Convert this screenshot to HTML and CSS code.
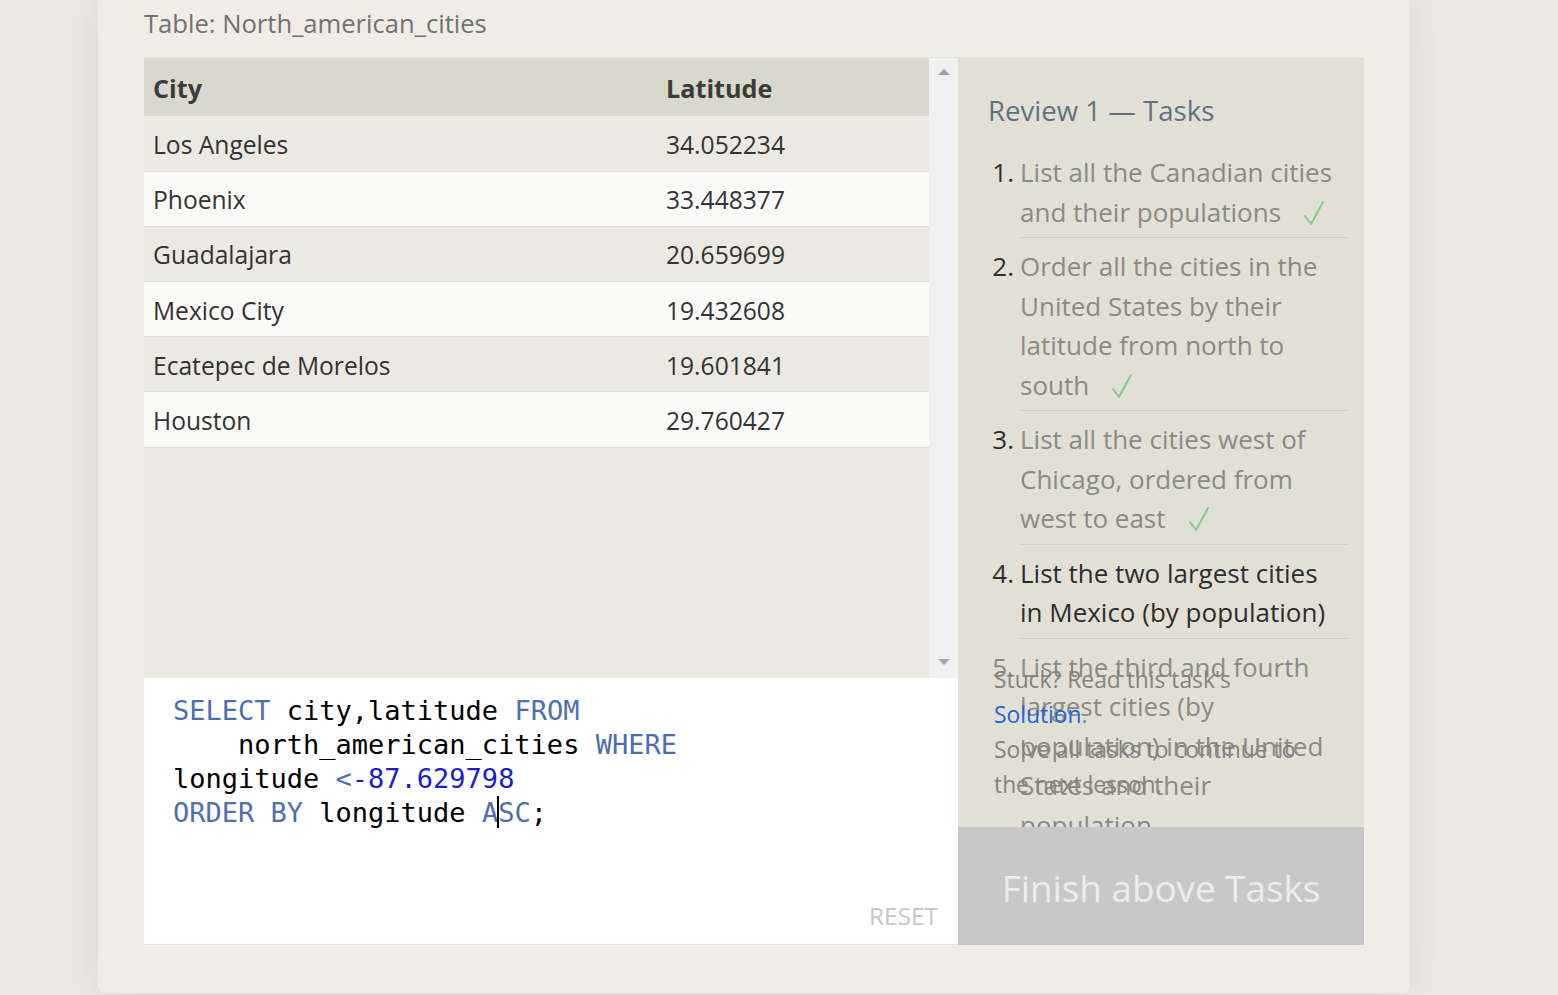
FILE: index.html
```html
<!DOCTYPE html>
<html>
<head>
<meta charset="utf-8">
<title>SQL Review</title>
<link rel="stylesheet" href="styles.css">
</head>
<body>
<div class="card">
  <div class="table-title">Table: North_american_cities</div>
  <div class="workspace">
    <div class="left">
      <div class="table-box">
        <div class="table-scroll">
          <table class="results">
            <thead>
              <tr><th class="c1">City</th><th>Latitude</th></tr>
            </thead>
            <tbody>
              <tr><td>Los Angeles</td><td>34.052234</td></tr>
              <tr><td>Phoenix</td><td>33.448377</td></tr>
              <tr><td>Guadalajara</td><td>20.659699</td></tr>
              <tr><td>Mexico City</td><td>19.432608</td></tr>
              <tr><td>Ecatepec de Morelos</td><td>19.601841</td></tr>
              <tr><td>Houston</td><td>29.760427</td></tr>
            </tbody>
          </table>
        </div>
        <div class="scrollbar">
          <span class="arrow up"></span>
          <span class="arrow down"></span>
        </div>
      </div>
      <div class="editor">
        <pre class="code"><span class="kw">SELECT</span> city,latitude <span class="kw">FROM</span>
    north_american_cities <span class="kw">WHERE</span>
longitude <span class="kw">&lt;</span><span class="num">-87.629798</span>
<span class="kw">ORDER</span> <span class="kw">BY</span> longitude <span class="kw">A<span class="caret"></span>SC</span>;</pre>
        <div class="reset">RESET</div>
      </div>
    </div>
    <div class="panel">
      <h2 class="panel-title">Review 1 — Tasks</h2>
      <ol class="tasks">
        <li class="task done"><span class="n">1.</span><span class="t">List all the Canadian cities and their populations<svg class="check" viewBox="0 0 22 26" width="22" height="26"><polyline points="2,16 8,24 20,2"/></svg></span></li>
        <li class="task done"><span class="n">2.</span><span class="t">Order all the cities in the United States by their latitude from north to south<svg class="check" viewBox="0 0 22 26" width="22" height="26"><polyline points="2,16 8,24 20,2"/></svg></span></li>
        <li class="task done"><span class="n">3.</span><span class="t">List all the cities west of Chicago, ordered from west to east<svg class="check" viewBox="0 0 22 26" width="22" height="26"><polyline points="2,16 8,24 20,2"/></svg></span></li>
        <li class="task current"><span class="n">4.</span><span class="t">List the two largest cities in Mexico (by population)</span></li>
        <li class="task todo"><span class="n">5.</span><span class="t">List the third and fourth largest cities (by population) in the United States and their population</span></li>
      </ol>
      <div class="stuck">Stuck? Read this task's <a class="sol" href="#">Solution</a>.<br>Solve all tasks to continue to the next lesson.</div>
      <div class="finish">Finish above Tasks</div>
    </div>
  </div>
</div>
</body>
</html>
```

FILE: styles.css
```css
html, body {
  margin: 0;
  padding: 0;
}
body {
  background: #ede8e5;
  font-family: "Open Sans", "Noto Sans", sans-serif;
  overflow: hidden;
  height: 995px;
}
.card {
  margin-left: 98px;
  width: 1312px;
  padding: 0 46px 48px 46px;
  box-sizing: border-box;
  background: #f0ede6;
  border-radius: 0 0 6px 6px;
  box-shadow: 0 0 40px rgba(90, 60, 50, 0.10);
}
.table-title {
  height: 57px;
  box-sizing: border-box;
  padding-top: 6px;
  font-size: 25.6px;
  line-height: 36px;
  color: #727272;
}
.workspace {
  display: flex;
  height: 888px;
}
.left {
  width: 814px;
  display: flex;
  flex-direction: column;
}
.table-box {
  height: 621px;
  display: flex;
  background: #e9e8e0;
  border-top: 1px solid #e4e2da;
  box-sizing: border-box;
}
.table-scroll {
  width: 785px;
}
.results {
  width: 100%;
  border-collapse: collapse;
  color: #333;
  font-size: 24.6px;
}
.results th {
  background: #d9d8cc;
  height: 58px;
  text-align: left;
  font-weight: 700;
  color: #3b3b3b;
  padding: 2px 0 0 9px;
  box-sizing: border-box;
  font-size: 25.2px;
}
.results th.c1 {
  width: 513px;
}
.results td {
  height: 55.2px;
  padding: 2px 0 0 9px;
  box-sizing: border-box;
  border-bottom: 1px solid #e0ded6;
}
.results tbody tr:nth-child(odd) td {
  background: #ebe9e1;
}
.results tbody tr:nth-child(even) td {
  background: #fafaf8;
}
.scrollbar {
  width: 29px;
  background: #f0f0f0;
  display: flex;
  flex-direction: column;
  justify-content: space-between;
  align-items: center;
  padding: 11px 0 13px;
  box-sizing: border-box;
}
.arrow {
  width: 0;
  height: 0;
  border-left: 6px solid transparent;
  border-right: 6px solid transparent;
}
.arrow.up {
  border-bottom: 6px solid #a3a3a3;
}
.arrow.down {
  border-top: 6px solid #a3a3a3;
}
.editor {
  flex: 1;
  background: #fff;
  border-bottom: 1px solid #e2e0d8;
  display: flex;
  flex-direction: column;
  padding: 16px 20px 13px 29px;
}
.code {
  margin: 0;
  font-family: "DejaVu Sans Mono", "Liberation Mono", monospace;
  font-size: 27px;
  line-height: 34px;
  color: #000;
}
.kw {
  color: #4e6fae;
}
.num {
  color: #1c1ccc;
}
.caret {
  display: inline-block;
  width: 2px;
  height: 32px;
  background: #000;
  vertical-align: -6px;
  margin: 0 -1px;
}
.reset {
  margin-top: auto;
  align-self: flex-end;
  font-size: 24.4px;
  color: #c6c6c6;
  line-height: 30px;
}
.panel {
  width: 406px;
  background: #e2e0d5;
  display: flex;
  flex-direction: column;
  overflow: hidden;
  border-top: 1px solid #e6e4dc;
  box-sizing: border-box;
}
.panel-title {
  margin: 0;
  padding: 33px 0 0 30px;
  height: 86px;
  box-sizing: border-box;
  font-size: 27.6px;
  line-height: 38px;
  font-weight: 400;
  color: #637080;
}
.tasks {
  list-style: none;
  margin: 0;
  padding: 0 16px 0 30px;
  height: 518px;
  flex: none;
  font-size: 26px;
  line-height: 39.5px;
}
.task {
  display: flex;
  padding-top: 9px;
}
.task .n {
  width: 32px;
  flex: none;
  text-align: right;
  padding-right: 6px;
  box-sizing: border-box;
  color: #2e2e2e;
}
.task .t {
  flex: 1;
  padding: 0 10px 5px 0;
  border-bottom: 1px solid #d3d1c6;
}
.task.done .t {
  color: #8a8a86;
}
.task.current .t {
  color: #2e2e2e;
}
.task.todo .t {
  color: #8a8a86;
  border-bottom: none;
}
.task.todo .n {
  color: #8a8a86;
}
.check {
  margin-left: 22px;
  vertical-align: -4px;
  fill: none;
  stroke: #80cd8c;
  stroke-width: 2;
  stroke-linecap: round;
  stroke-linejoin: round;
}
.stuck {
  padding: 0 0 0 36px;
  width: 350px;
  box-sizing: border-box;
  font-size: 22.8px;
  line-height: 35px;
  color: #85837e;
}
.sol {
  color: #2563d9;
  text-decoration: none;
}
.finish {
  position: relative;
  margin-top: auto;
  height: 118px;
  flex: none;
  background: #c8c8c8;
  color: #ececec;
  font-size: 36.8px;
  padding-top: 3px;
  box-sizing: border-box;
  display: flex;
  align-items: center;
  justify-content: center;
}
```
